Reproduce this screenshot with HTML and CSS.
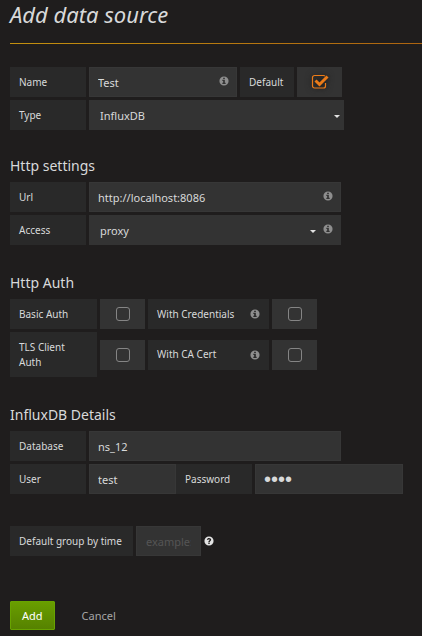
FILE: index.html
```html
<!DOCTYPE html>
<html lang="en">
<head>
<meta charset="utf-8">
<meta name="viewport" content="width=device-width, initial-scale=1">
<title>Add data source</title>
<link rel="stylesheet" href="styles.css">
</head>
<body>
<svg class="defs" aria-hidden="true">
  <symbol id="info" viewBox="0 0 12 12">
    <path fill-rule="evenodd" d="M6 .5a5.500 5.500 0 1 0 0 11a5.500 5.500 0 1 0 0-11zM5 2h2v1.600H5zM4 4.600h3v3.400h1v1.500H4V8h1V6H4z"/>
  </symbol>
  <symbol id="question" viewBox="0 0 12 12">
    <path fill-rule="evenodd" d="M6 .5a5.500 5.500 0 1 0 0 11a5.500 5.500 0 1 0 0-11zM5.200 8.200h1.600v1.500H5.200zM3.400 4.200C3.800 2.900 4.800 2.300 6 2.300c1.500 0 2.600.9 2.600 2.100 0 1.600-1.800 1.700-1.800 3.100H5.200c0-2 1.600-2.100 1.600-3 0-.4-.3-.7-.8-.7s-.8.300-1.200.9z"/>
  </symbol>
</svg>
<main class="page">
  <h1 class="title">Add data source</h1>
  <form>
    <section class="group first">
      <div class="row">
        <label class="label" for="name">Name</label>
        <div class="field w-name">
          <input class="input" id="name" type="text" value="Test">
          <svg class="icon tip"><use href="#info"/></svg>
        </div>
        <label class="label w-default" for="default">Default</label>
        <div class="check">
          <input id="default" type="checkbox" checked>
          <svg class="tick" viewBox="0 0 18 16" aria-hidden="true">
            <path class="tick-box" d="M14.500 9v3a2 2 0 0 1-2 2h-9a2 2 0 0 1-2-2v-8.500a2 2 0 0 1 2-2h9q1 0 1.500.5"/>
            <path class="tick-mark" d="M4.500 6.500l4 4 8-8"/>
          </svg>
        </div>
      </div>
      <div class="row">
        <label class="label" for="type">Type</label>
        <div class="field w-type">
          <select class="input select" id="type"><option>InfluxDB</option></select>
          <span class="caret"></span>
        </div>
      </div>
    </section>

    <section class="group">
      <h2 class="heading">Http settings</h2>
      <div class="row">
        <label class="label" for="url">Url</label>
        <div class="field w-wide">
          <input class="input" id="url" type="text" value="http://localhost:8086">
          <svg class="icon tip"><use href="#info"/></svg>
        </div>
      </div>
      <div class="row">
        <label class="label" for="access">Access</label>
        <div class="field w-wide">
          <select class="input select" id="access"><option>proxy</option></select>
          <span class="caret caret-inner"></span>
          <svg class="icon tip"><use href="#info"/></svg>
        </div>
      </div>
    </section>

    <section class="group">
      <h2 class="heading">Http Auth</h2>
      <div class="row">
        <label class="label w-auth" for="basic">Basic Auth</label>
        <div class="check"><input id="basic" type="checkbox"></div>
        <label class="label w-with" for="credentials">With Credentials <svg class="icon"><use href="#info"/></svg></label>
        <div class="check"><input id="credentials" type="checkbox"></div>
      </div>
      <div class="row">
        <label class="label w-auth tall" for="tls">TLS Client Auth</label>
        <div class="check"><input id="tls" type="checkbox"></div>
        <label class="label w-with" for="cacert">With CA Cert <svg class="icon"><use href="#info"/></svg></label>
        <div class="check"><input id="cacert" type="checkbox"></div>
      </div>
    </section>

    <section class="group">
      <h2 class="heading">InfluxDB Details</h2>
      <div class="row">
        <label class="label" for="database">Database</label>
        <div class="field w-wide"><input class="input" id="database" type="text" value="ns_12"></div>
      </div>
      <div class="row">
        <label class="label" for="user">User</label>
        <div class="pair">
          <div class="field w-user"><input class="input" id="user" type="text" value="test"></div>
          <label class="label" for="password">Password</label>
        </div>
        <div class="field w-name"><input class="input password" id="password" type="password" value="test"></div>
      </div>
    </section>

    <section class="group interval">
      <div class="row">
        <label class="label w-time" for="time">Default group by time</label>
        <div class="field w-example"><input class="input example" id="time" type="text" placeholder="example: &gt;10s"></div>
        <svg class="icon help"><use href="#question"/></svg>
      </div>
    </section>

    <div class="actions">
      <button class="add" type="submit">Add</button>
      <a class="cancel" href="#">Cancel</a>
    </div>
  </form>
</main>
</body>
</html>
```
FILE: styles.css
```css
* { box-sizing: border-box; }

body {
  margin: 0;
  background: #1f1d1d;
  color: #d8d9da;
  font: 11px/15px "Noto Sans", "Open Sans", sans-serif;
}

.defs { position: absolute; width: 0; height: 0; }

.page { padding-left: 10px; }

.title {
  margin: 0 0 23px;
  padding-bottom: 14px;
  border-bottom: 1px solid;
  border-image: linear-gradient(to right, #c2900f, #ad6410) 1;
  font-size: 22px;
  line-height: 29px;
  font-weight: 400;
  font-style: italic;
}

.group {
  display: flex;
  flex-direction: column;
  gap: 3px;
  margin-bottom: 28px;
}
.first { margin-bottom: 26px; }
.interval { padding-top: 4px; }

.heading {
  margin: 0 0 3px;
  font-size: 14px;
  line-height: 20px;
  font-weight: 400;
}

.row { display: flex; align-items: center; gap: 3px; }
.pair { display: flex; }

.label {
  display: flex;
  align-items: center;
  justify-content: space-between;
  flex: none;
  width: 76px;
  min-height: 30px;
  padding: 0 9px;
  background: #292929;
  font-size: 10px;
}

.w-default { width: 54px; }
.w-auth { width: 87px; }
.w-with { width: 121px; }
.w-time { width: 123px; }
.tall { min-height: 45px; }

.field { position: relative; flex: none; }
.w-name { width: 148px; }
.w-type { width: 255px; }
.w-wide { width: 252px; }
.w-user { width: 87px; }
.w-example { width: 65px; }

.input {
  display: block;
  width: 100%;
  height: 30px;
  padding: 0 8px;
  border: 1px solid #373737;
  border-radius: 0;
  background: #333;
  color: #d8d9da;
  font: inherit;
  outline: 0;
}

.select { appearance: none; padding: 0 10px; border-color: #333; }
.password { font: 20px "Liberation Sans", sans-serif; }
.example { padding: 0 9px; }
.example::placeholder { color: #555; opacity: 1; }

.icon { flex: none; width: 10px; height: 10px; fill: #8e8e8e; }
.tip { position: absolute; right: 8px; top: 9px; }
.help { fill: #e3e3e3; }

.caret {
  position: absolute;
  right: 4px;
  top: 15px;
  border: 3px solid transparent;
  border-top-color: #e3e3e3;
  border-bottom: 0;
  pointer-events: none;
}
.caret-inner { right: 25px; }

.check {
  display: grid;
  place-items: center;
  flex: none;
  width: 45px;
  height: 30px;
  background: #333;
}

.check input {
  grid-area: 1 / 1;
  appearance: none;
  width: 14px;
  height: 14px;
  margin: 0;
  border: 1px solid #858585;
  border-radius: 3px;
}
.check input:checked { border-color: transparent; }

.tick {
  grid-area: 1 / 1;
  width: 18px;
  height: 16px;
  fill: none;
  stroke: #eb7b18;
  pointer-events: none;
  filter: drop-shadow(0 0 3px #111);
}
.tick-box { stroke-width: 1.200; }
.tick-mark { stroke-width: 3; }

.actions { display: flex; align-items: center; gap: 27px; padding: 17px 0 6px; }

.add {
  height: 29px;
  padding: 0 11px;
  border: 1px solid #68a300;
  border-radius: 1px;
  background: linear-gradient(#699e00, #568200);
  color: #fff;
  font: inherit;
}

.cancel { color: #a5a5a5; text-decoration: none; }
```
